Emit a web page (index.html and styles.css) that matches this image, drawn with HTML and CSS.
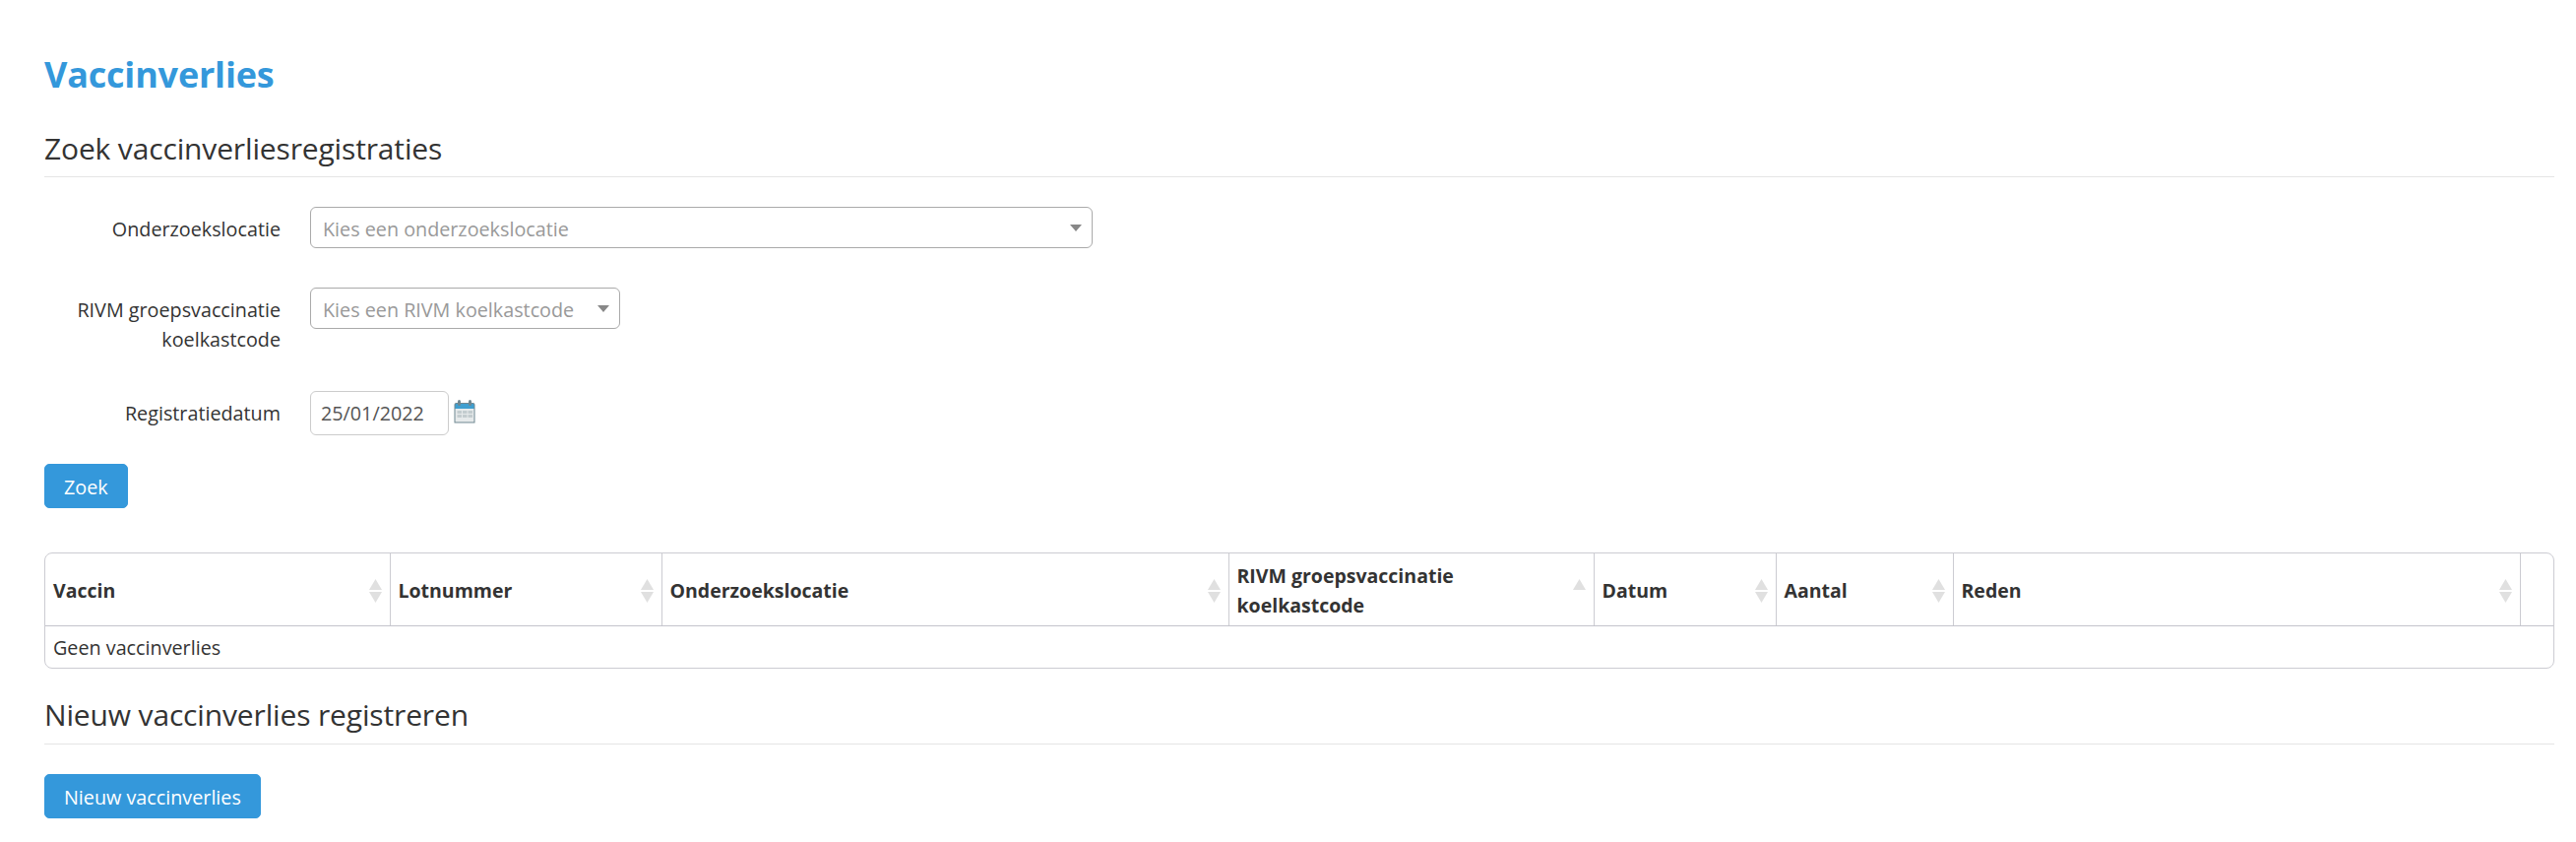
FILE: index.html
```html
<!DOCTYPE html>
<html lang="nl">
<head>
<meta charset="utf-8">
<title>Vaccinverlies</title>
<link rel="stylesheet" href="styles.css">
</head>
<body>
<main class="page">
  <h1 class="title">Vaccinverlies</h1>
  <h2 class="section-head">Zoek vaccinverliesregistraties</h2>
  <form class="search">
    <div class="row row-loc">
      <label class="lbl">Onderzoekslocatie</label>
      <div class="select select-wide"><span class="ph">Kies een onderzoekslocatie</span><i class="caret"></i></div>
    </div>
    <div class="row row-rivm">
      <label class="lbl">RIVM groepsvaccinatie koelkastcode</label>
      <div class="select select-small"><span class="ph">Kies een RIVM koelkastcode</span><i class="caret"></i></div>
    </div>
    <div class="row row-date">
      <label class="lbl">Registratiedatum</label>
      <div class="date">25/01/2022</div>
      <svg class="cal" width="22" height="24" viewBox="0 0 22 24">
        <path d="M0.5 5Q0.5 3 2.5 3H19.5Q21.5 3 21.5 5V23.5H0.5Z" fill="#6f8791"/>
        <path d="M1.5 5Q1.5 4 2.5 4H19.5Q20.5 4 20.5 5V9H1.5Z" fill="#3f9fd0"/>
        <rect x="1.5" y="9" width="19" height="13.5" fill="#e6eaeb"/>
        <g fill="#c3cccf">
          <rect x="3.5" y="11" width="4.5" height="3"/><rect x="9" y="11" width="4.5" height="3"/><rect x="14.5" y="11" width="4.5" height="3"/>
          <rect x="3.5" y="15" width="4.5" height="3"/><rect x="9" y="15" width="4.5" height="3"/><rect x="14.5" y="15" width="4.5" height="3"/>
        </g>
        <rect x="4" y="0" width="3" height="6" rx="1.5" fill="#6f8791"/>
        <rect x="15" y="0" width="3" height="6" rx="1.5" fill="#6f8791"/>
      </svg>
    </div>
    <button type="button" class="btn btn-search">Zoek</button>
  </form>
  <div class="table-wrap">
    <table class="grid">
      <colgroup>
        <col class="c1"><col class="c2"><col class="c3"><col class="c4"><col class="c5"><col class="c6"><col class="c7"><col class="c8">
      </colgroup>
      <thead>
        <tr>
          <th><div class="th-in"><span>Vaccin</span><svg class="sort" width="13" height="24" viewBox="0 0 13 24"><path d="M6.5 0 13 11H0Z" fill="#e0e0e0"/><path d="M0 13H13L6.5 24Z" fill="#e0e0e0"/></svg></div></th>
          <th><div class="th-in"><span>Lotnummer</span><svg class="sort" width="13" height="24" viewBox="0 0 13 24"><path d="M6.5 0 13 11H0Z" fill="#e0e0e0"/><path d="M0 13H13L6.5 24Z" fill="#e0e0e0"/></svg></div></th>
          <th><div class="th-in"><span>Onderzoekslocatie</span><svg class="sort" width="13" height="24" viewBox="0 0 13 24"><path d="M6.5 0 13 11H0Z" fill="#e0e0e0"/><path d="M0 13H13L6.5 24Z" fill="#e0e0e0"/></svg></div></th>
          <th><div class="th-in"><span>RIVM groepsvaccinatie koelkastcode</span><svg class="sort" width="13" height="24" viewBox="0 0 13 24"><path d="M6.5 0 13 11H0Z" fill="#e0e0e0"/></svg></div></th>
          <th><div class="th-in"><span>Datum</span><svg class="sort" width="13" height="24" viewBox="0 0 13 24"><path d="M6.5 0 13 11H0Z" fill="#e0e0e0"/><path d="M0 13H13L6.5 24Z" fill="#e0e0e0"/></svg></div></th>
          <th><div class="th-in"><span>Aantal</span><svg class="sort" width="13" height="24" viewBox="0 0 13 24"><path d="M6.5 0 13 11H0Z" fill="#e0e0e0"/><path d="M0 13H13L6.5 24Z" fill="#e0e0e0"/></svg></div></th>
          <th><div class="th-in"><span>Reden</span><svg class="sort" width="13" height="24" viewBox="0 0 13 24"><path d="M6.5 0 13 11H0Z" fill="#e0e0e0"/><path d="M0 13H13L6.5 24Z" fill="#e0e0e0"/></svg></div></th>
          <th></th>
        </tr>
      </thead>
      <tbody>
        <tr><td colspan="8">Geen vaccinverlies</td></tr>
      </tbody>
    </table>
  </div>
  <h2 class="section-head section-new">Nieuw vaccinverlies registreren</h2>
  <button type="button" class="btn btn-new">Nieuw vaccinverlies</button>
</main>
</body>
</html>
```
FILE: styles.css
```css
* { box-sizing: border-box; }
html, body { margin: 0; background: #fff; }
body { font-family: "Open Sans", "Noto Sans", sans-serif; font-size: 19.75px; line-height: 30px; color: #333; }
.page { padding: 50px 22px 0 45px; }
.title { margin: 0; font-size: 36px; line-height: 52px; font-weight: 700; color: #3498db; letter-spacing: -0.2px; }
.section-head { margin: 29px 0 0; padding-bottom: 8px; font-size: 30px; line-height: 40px; font-weight: 400; color: #333; border-bottom: 1px solid #e5e5e5; letter-spacing: -0.15px; }
.search { margin-top: 30px; }
.row { display: flex; align-items: flex-start; }
.row-rivm { margin-top: 40px; }
.row-date { margin-top: 37px; align-items: center; }
.lbl { width: 240px; margin-right: 30px; text-align: right; }
.row-loc .lbl { padding-top: 8px; }
.row-rivm .lbl { padding-top: 8px; }
.select { display: flex; align-items: center; justify-content: space-between; height: 42px; border: 1px solid #aaa; border-radius: 6px; padding: 3px 10px 0 12px; background: #fff; }
.select-wide { width: 795px; }
.select-small { width: 315px; }
.ph { color: #999; }
.caret { width: 0; height: 0; border-left: 6px solid transparent; border-right: 6px solid transparent; border-top: 7px solid #888; margin-top: -3px; }
.date { width: 141px; height: 45px; padding: 7px 10px; border: 1px solid #ccc; border-radius: 6px; color: #555; }
.cal { margin-left: 5px; margin-top: -4px; }
.btn { display: block; height: 45px; border: 1px solid #3498db; border-radius: 5px; background: #3498db; color: #fff; font: inherit; padding: 2px 19px 0; }
.btn-search { margin-top: 29px; }
.table-wrap { margin-top: 45px; border: 1px solid #ccccd2; border-radius: 8px; overflow: hidden; }
.grid { width: 100%; border-collapse: collapse; table-layout: fixed; }
.c1 { width: 350px; } .c2 { width: 276px; } .c3 { width: 576px; } .c4 { width: 371px; }
.c5 { width: 185px; } .c6 { width: 180px; } .c7 { width: 576px; }
th { height: 73px; padding: 3px 8px 0; text-align: left; font-weight: 700; font-size: 19.5px; border-right: 1px solid #ccccd2; border-bottom: 1px solid #c4c4cc; vertical-align: middle; }
th:last-child { border-right: 0; }
.th-in { display: flex; align-items: center; justify-content: space-between; gap: 8px; }
.sort { flex: none; }
td { height: 43px; padding: 2px 8px 0; }
.section-new { margin-top: 27px; padding-bottom: 9px; }
.btn-new { margin-top: 30px; }
```
